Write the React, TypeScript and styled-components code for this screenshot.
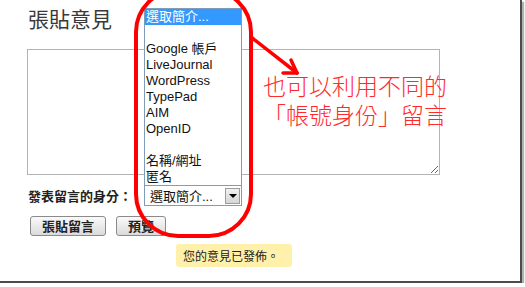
import styled, { createGlobalStyle } from "styled-components";

const GlobalStyle = createGlobalStyle`
  body {
    margin: 0;
    background: #ffffff;
    font-family: "Liberation Sans", "Noto Sans CJK TC", sans-serif;
  }
`;

const Frame = styled.div`
  position: relative;
  width: 522px;
  height: 283px;
  box-sizing: border-box;
  background: #ffffff;
  border-right: 2px solid #4c4c4c;
  border-bottom: 2px solid #4c4c4c;
  box-shadow: 2px 2px 1px rgba(0, 0, 0, 0.3);
  overflow: hidden;
  display: flex;
  flex-direction: column;
  padding-left: 27px;
`;

const Title = styled.h2`
  margin: 4px 0 17px 1px;
  font-family: "Noto Sans CJK TC", sans-serif;
  font-size: 21px;
  font-weight: 400;
  line-height: 28px;
  color: #3a3a3a;
`;

const CommentBox = styled.textarea`
  width: 413px;
  height: 126px;
  box-sizing: border-box;
  border: 1px solid #b4b4b4;
  margin: 0;
  resize: both;
`;

const IdentityRow = styled.div`
  display: flex;
  align-items: center;
  margin-top: 10px;
  height: 21px;
`;

const Label = styled.span`
  width: 117px;
  padding-left: 1px;
  box-sizing: border-box;
  font-family: "Noto Sans CJK TC", sans-serif;
  font-size: 13px;
  font-weight: 700;
  color: #222;
`;

const SelectWrap = styled.div`
  position: relative;
  width: 98px;
  height: 21px;
  box-sizing: border-box;
  border: 1px solid #7f9db9;
  display: flex;
  align-items: center;
  justify-content: space-between;
  padding: 0 1px 0 5px;
  font-size: 13px;
  color: #111;
`;

const ArrowButton = styled.span`
  width: 15px;
  height: 16px;
  box-sizing: border-box;
  border: 1px solid #9c9c9c;
  background: linear-gradient(#f2f2f2, #d6d6d6);
  display: flex;
  align-items: center;
  justify-content: center;
  &::after {
    content: "";
    border-left: 4px solid transparent;
    border-right: 4px solid transparent;
    border-top: 4px solid #000;
  }
`;

const OptionList = styled.ul`
  position: absolute;
  left: -1px;
  bottom: 100%;
  width: 98px;
  margin: 0;
  padding: 0;
  list-style: none;
  box-sizing: border-box;
  border: 1px solid #7f9db9;
  background: #fff;
`;

const Option = styled.li<{ $active?: boolean }>`
  height: 16px;
  line-height: 16px;
  padding-left: 1px;
  font-size: 13px;
  white-space: nowrap;
  color: ${(p) => (p.$active ? "#ffffff" : "#111111")};
  background: ${(p) => (p.$active ? "#3399ff" : "transparent")};
`;

const ButtonRow = styled.div`
  display: flex;
  gap: 10px;
  margin-top: 10px;
  padding-left: 3px;
`;

const Button = styled.button`
  height: 20px;
  padding: 0 11px;
  border: 1px solid #8a8a8a;
  border-radius: 3px;
  background: linear-gradient(#fafafa, #dadada);
  font-family: "Noto Sans CJK TC", sans-serif;
  font-size: 13px;
  font-weight: 700;
  line-height: 18px;
  color: #222;
`;

const Notice = styled.div`
  align-self: flex-start;
  margin: 8px 0 0 149px;
  height: 23px;
  line-height: 23px;
  padding: 0 13px 0 7px;
  background: #fff1ab;
  border-radius: 3px;
  font-family: "Noto Sans CJK TC", sans-serif;
  font-size: 12px;
  color: #222;
`;

const Highlight = styled.div`
  position: absolute;
  left: 134px;
  top: -12px;
  width: 119px;
  height: 250px;
  box-sizing: border-box;
  border: 4px solid #ff0000;
  border-radius: 44px;
  pointer-events: none;
`;

const Arrow = styled.svg`
  position: absolute;
  left: 0;
  top: 0;
  pointer-events: none;
`;

const Callout = styled.div`
  position: absolute;
  left: 263px;
  top: 74px;
  display: flex;
  flex-direction: column;
  font-family: "Liberation Sans", "Noto Sans CJK TC", sans-serif;
  font-size: 23px;
  font-weight: 300;
  color: #ff2a2a;
`;

const CalloutLine = styled.span`
  display: block;
  height: 29px;
  line-height: 27px;
  white-space: nowrap;
`;

const options = [
  "",
  "Google 帳戶",
  "LiveJournal",
  "WordPress",
  "TypePad",
  "AIM",
  "OpenID",
  "",
  "名稱/網址",
  "匿名",
];

export default function App() {
  return (
    <>
      <GlobalStyle />
      <Frame>
        <Title>張貼意見</Title>
        <CommentBox />
        <IdentityRow>
          <Label>發表留言的身分：</Label>
          <SelectWrap>
            選取簡介...
            <ArrowButton />
            <OptionList>
              <Option $active>選取簡介...</Option>
              {options.map((o, i) => (
                <Option key={i}>{o || "\u00a0"}</Option>
              ))}
            </OptionList>
          </SelectWrap>
        </IdentityRow>
        <ButtonRow>
          <Button>張貼留言</Button>
          <Button>預覽</Button>
        </ButtonRow>
        <Notice>您的意見已發佈。</Notice>

        <Highlight />
        <Arrow width="320" height="90" viewBox="0 0 320 90">
          <g stroke="#ff0000" strokeWidth="3.5" strokeLinecap="round" fill="none">
            <line x1="251" y1="37" x2="297" y2="73" />
            <line x1="297" y1="73" x2="291" y2="60" />
            <line x1="297" y1="73" x2="283" y2="73" />
          </g>
        </Arrow>
        <Callout>
          <CalloutLine>也可以利用不同的</CalloutLine>
          <CalloutLine>「帳號身份」留言</CalloutLine>
        </Callout>
      </Frame>
    </>
  );
}
